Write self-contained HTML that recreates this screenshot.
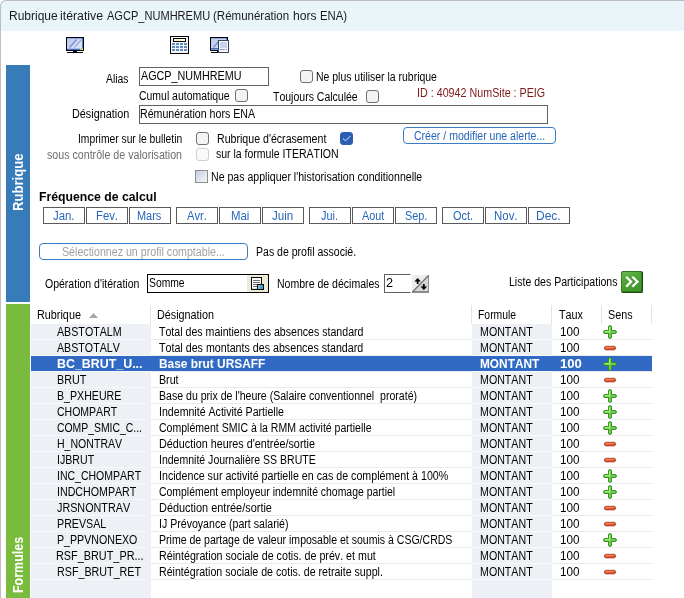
<!DOCTYPE html>
<html lang="fr"><head><meta charset="utf-8"><title>Rubrique itérative AGCP_NUMHREMU</title>
<style>
html,body{margin:0;padding:0;background:#fff;}
body{width:684px;height:598px;overflow:hidden;position:relative;font-family:"Liberation Sans",sans-serif;}
#win{will-change:transform;position:absolute;left:0;top:0;width:684px;height:598px;overflow:hidden;background:#fff;}
.t{position:absolute;white-space:nowrap;font-size:12px;line-height:16px;color:#000;transform-origin:0 0;font-kerning:none;}
.b{position:absolute;}
.cb{position:absolute;width:13px;height:13px;box-sizing:border-box;border:1px solid #707070;border-radius:3px;background:#f3f3f3;}
.cb.dis{border-color:#cfcfcf;background:#fafafa;}
.cb.on{border-color:#2c5db5;background:#2c5db5;}
.inp{position:absolute;box-sizing:border-box;border:1px solid #626262;background:#fff;}
.rbtn{position:absolute;box-sizing:border-box;border:1px solid #3b7cc4;border-radius:4px;background:#fff;}
.vt{position:absolute;color:#fff;font-weight:bold;font-size:14px;line-height:20px;font-kerning:none;white-space:nowrap;transform-origin:0 0;transform:rotate(-90deg);}
svg{position:absolute;overflow:visible;}
</style></head>
<body>
<div id="win">
<div class="b" style="left:31px;top:324px;width:120px;height:274px;background:#edf0f5"></div>
<div class="b" style="left:472px;top:324px;width:80px;height:274px;background:#edf0f5"></div>
<div class="b" style="left:31px;top:339px;width:621px;height:1px;background:#ebebeb"></div>
<div class="b" style="left:31px;top:339px;width:120px;height:1px;background:#f6f8fb"></div>
<div class="b" style="left:472px;top:339px;width:80px;height:1px;background:#f6f8fb"></div>
<div class="b" style="left:31px;top:355px;width:621px;height:1px;background:#ebebeb"></div>
<div class="b" style="left:31px;top:355px;width:120px;height:1px;background:#f6f8fb"></div>
<div class="b" style="left:472px;top:355px;width:80px;height:1px;background:#f6f8fb"></div>
<div class="b" style="left:31px;top:371px;width:621px;height:1px;background:#ebebeb"></div>
<div class="b" style="left:31px;top:371px;width:120px;height:1px;background:#f6f8fb"></div>
<div class="b" style="left:472px;top:371px;width:80px;height:1px;background:#f6f8fb"></div>
<div class="b" style="left:31px;top:387px;width:621px;height:1px;background:#ebebeb"></div>
<div class="b" style="left:31px;top:387px;width:120px;height:1px;background:#f6f8fb"></div>
<div class="b" style="left:472px;top:387px;width:80px;height:1px;background:#f6f8fb"></div>
<div class="b" style="left:31px;top:403px;width:621px;height:1px;background:#ebebeb"></div>
<div class="b" style="left:31px;top:403px;width:120px;height:1px;background:#f6f8fb"></div>
<div class="b" style="left:472px;top:403px;width:80px;height:1px;background:#f6f8fb"></div>
<div class="b" style="left:31px;top:419px;width:621px;height:1px;background:#ebebeb"></div>
<div class="b" style="left:31px;top:419px;width:120px;height:1px;background:#f6f8fb"></div>
<div class="b" style="left:472px;top:419px;width:80px;height:1px;background:#f6f8fb"></div>
<div class="b" style="left:31px;top:435px;width:621px;height:1px;background:#ebebeb"></div>
<div class="b" style="left:31px;top:435px;width:120px;height:1px;background:#f6f8fb"></div>
<div class="b" style="left:472px;top:435px;width:80px;height:1px;background:#f6f8fb"></div>
<div class="b" style="left:31px;top:451px;width:621px;height:1px;background:#ebebeb"></div>
<div class="b" style="left:31px;top:451px;width:120px;height:1px;background:#f6f8fb"></div>
<div class="b" style="left:472px;top:451px;width:80px;height:1px;background:#f6f8fb"></div>
<div class="b" style="left:31px;top:467px;width:621px;height:1px;background:#ebebeb"></div>
<div class="b" style="left:31px;top:467px;width:120px;height:1px;background:#f6f8fb"></div>
<div class="b" style="left:472px;top:467px;width:80px;height:1px;background:#f6f8fb"></div>
<div class="b" style="left:31px;top:483px;width:621px;height:1px;background:#ebebeb"></div>
<div class="b" style="left:31px;top:483px;width:120px;height:1px;background:#f6f8fb"></div>
<div class="b" style="left:472px;top:483px;width:80px;height:1px;background:#f6f8fb"></div>
<div class="b" style="left:31px;top:499px;width:621px;height:1px;background:#ebebeb"></div>
<div class="b" style="left:31px;top:499px;width:120px;height:1px;background:#f6f8fb"></div>
<div class="b" style="left:472px;top:499px;width:80px;height:1px;background:#f6f8fb"></div>
<div class="b" style="left:31px;top:515px;width:621px;height:1px;background:#ebebeb"></div>
<div class="b" style="left:31px;top:515px;width:120px;height:1px;background:#f6f8fb"></div>
<div class="b" style="left:472px;top:515px;width:80px;height:1px;background:#f6f8fb"></div>
<div class="b" style="left:31px;top:531px;width:621px;height:1px;background:#ebebeb"></div>
<div class="b" style="left:31px;top:531px;width:120px;height:1px;background:#f6f8fb"></div>
<div class="b" style="left:472px;top:531px;width:80px;height:1px;background:#f6f8fb"></div>
<div class="b" style="left:31px;top:547px;width:621px;height:1px;background:#ebebeb"></div>
<div class="b" style="left:31px;top:547px;width:120px;height:1px;background:#f6f8fb"></div>
<div class="b" style="left:472px;top:547px;width:80px;height:1px;background:#f6f8fb"></div>
<div class="b" style="left:31px;top:563px;width:621px;height:1px;background:#ebebeb"></div>
<div class="b" style="left:31px;top:563px;width:120px;height:1px;background:#f6f8fb"></div>
<div class="b" style="left:472px;top:563px;width:80px;height:1px;background:#f6f8fb"></div>
<div class="b" style="left:31px;top:579px;width:621px;height:1px;background:#ebebeb"></div>
<div class="b" style="left:31px;top:579px;width:120px;height:1px;background:#f6f8fb"></div>
<div class="b" style="left:472px;top:579px;width:80px;height:1px;background:#f6f8fb"></div>
<div class="b" style="left:31px;top:356px;width:621px;height:15px;background:#316ac5"></div>
<div class="b" style="left:150px;top:305px;width:1px;height:19px;background:#e2e2e2"></div>
<div class="b" style="left:471px;top:305px;width:1px;height:19px;background:#e2e2e2"></div>
<div class="b" style="left:551px;top:305px;width:1px;height:19px;background:#e2e2e2"></div>
<div class="b" style="left:601px;top:305px;width:1px;height:19px;background:#e2e2e2"></div>
<div class="b" style="left:651px;top:305px;width:1px;height:19px;background:#e2e2e2"></div>
<div class="b" style="left:43px;top:207px;width:42px;height:17px;border:1px solid #5a5a5a;box-sizing:border-box;background:#fff"></div>
<div class="b" style="left:86px;top:207px;width:42px;height:17px;border:1px solid #5a5a5a;box-sizing:border-box;background:#fff"></div>
<div class="b" style="left:129px;top:207px;width:42px;height:17px;border:1px solid #5a5a5a;box-sizing:border-box;background:#fff"></div>
<div class="b" style="left:176px;top:207px;width:42px;height:17px;border:1px solid #5a5a5a;box-sizing:border-box;background:#fff"></div>
<div class="b" style="left:219px;top:207px;width:42px;height:17px;border:1px solid #5a5a5a;box-sizing:border-box;background:#fff"></div>
<div class="b" style="left:262px;top:207px;width:42px;height:17px;border:1px solid #5a5a5a;box-sizing:border-box;background:#fff"></div>
<div class="b" style="left:309px;top:207px;width:42px;height:17px;border:1px solid #5a5a5a;box-sizing:border-box;background:#fff"></div>
<div class="b" style="left:352px;top:207px;width:42px;height:17px;border:1px solid #5a5a5a;box-sizing:border-box;background:#fff"></div>
<div class="b" style="left:395px;top:207px;width:42px;height:17px;border:1px solid #5a5a5a;box-sizing:border-box;background:#fff"></div>
<div class="b" style="left:442px;top:207px;width:42px;height:17px;border:1px solid #5a5a5a;box-sizing:border-box;background:#fff"></div>
<div class="b" style="left:485px;top:207px;width:42px;height:17px;border:1px solid #5a5a5a;box-sizing:border-box;background:#fff"></div>
<div class="b" style="left:528px;top:207px;width:42px;height:17px;border:1px solid #5a5a5a;box-sizing:border-box;background:#fff"></div>
<!-- window frame -->
<div class="b" style="left:0;top:0;width:700px;height:31px;background:#e9f5f8;border-top:1px solid #bdbdbd;border-left:1px solid #bdbdbd;border-top-left-radius:6px;box-sizing:border-box;"></div>
<div class="b" style="left:0;top:6px;width:1px;height:592px;background:#bebebe;"></div>
<!-- side bars -->
<div class="b" style="left:6px;top:65px;width:24px;height:237px;background:#377bb9;"></div>
<div class="b" style="left:6px;top:304px;width:24px;height:294px;background:#79bb3c;"></div>
<!-- inputs -->
<div class="inp" style="left:139px;top:67px;width:130px;height:19px;"></div>
<div class="inp" style="left:139px;top:105px;width:409px;height:19px;"></div>
<div class="inp" style="left:147px;top:274px;width:122px;height:19px;border-color:#000;"></div>
<div class="b" style="left:247px;top:275px;width:21px;height:17px;background:#ece9d8;"></div>
<div class="inp" style="left:384px;top:274px;width:27px;height:19px;border-color:#5f5f5f #fff #5f5f5f #5f5f5f;"></div>
<!-- checkboxes -->
<div class="cb" style="left:300px;top:70px;"></div>
<div class="cb" style="left:235px;top:89px;"></div>
<div class="cb" style="left:366px;top:90px;"></div>
<div class="cb" style="left:196px;top:132px;"></div>
<div class="cb dis" style="left:196px;top:148px;"></div>
<div class="cb on" style="left:340px;top:132px;"></div>
<svg style="left:340px;top:132px" width="13" height="13" viewBox="0 0 13 13"><path d="M3.3 6.8 L5.5 8.9 L9.9 4.4" fill="none" stroke="#e6edfa" stroke-width="1" stroke-linecap="round" stroke-linejoin="round"/></svg>
<div class="b" style="left:195px;top:170px;width:13px;height:13px;box-sizing:border-box;border:1px solid #8e8f8f;background:linear-gradient(135deg,#c3cbdb 0%,#dfe4ee 50%,#f4f6f9 100%);"></div>
<!-- rounded buttons -->
<div class="rbtn" style="left:403px;top:127px;width:153px;height:17px;"></div>
<div class="rbtn" style="left:39px;top:243px;width:209px;height:17px;"></div>
<!-- monitor icon -->
<svg style="left:66px;top:37px" width="18" height="16" viewBox="0 0 18 16" shape-rendering="crispEdges">
<defs><linearGradient id="scr" x1="0" y1="0" x2="1" y2="1"><stop offset="0" stop-color="#b9c9ea"/><stop offset="1" stop-color="#e2e9f6"/></linearGradient></defs>
<rect x="0" y="0" width="18" height="14" fill="#05050f"/>
<rect x="1" y="1" width="16" height="12" fill="url(#scr)"/>
<rect x="1" y="1" width="16" height="1" fill="#8ea6dc"/>
<rect x="16" y="1" width="1" height="11" fill="#5a7cc8"/>
<rect x="1" y="12" width="16" height="1" fill="#4a6fc0"/>
<rect x="1" y="11" width="16" height="1" fill="#a9bce6"/>
<rect x="14" y="12" width="3" height="1" fill="#f2e43c"/>
<g shape-rendering="auto"><path d="M3.5 10.5 L10.5 2.5" stroke="#7a93d6" stroke-width="1.6" fill="none"/><path d="M8.5 10.5 L15.5 2.5" stroke="#6a86d0" stroke-width="0.9" fill="none"/></g>
<rect x="7" y="14" width="4" height="1" fill="#05050f"/>
<rect x="1" y="15" width="16" height="1" fill="#05050f"/>
</svg>
<!-- calculator icon -->
<svg style="left:170px;top:36px" width="19" height="18" viewBox="0 0 19 18" shape-rendering="crispEdges">
<rect x="0" y="0" width="19" height="18" fill="#050505"/>
<rect x="1" y="1" width="17" height="16" fill="#f3f6fc"/>
<rect x="3" y="2" width="13" height="4" fill="#050505"/>
<rect x="4" y="3" width="11" height="2" fill="#fff"/>
<rect x="4" y="3" width="7" height="2" fill="#fbf2bd"/>
<g fill="#5f8fb8">
<rect x="2" y="7" width="3" height="2"/><rect x="6" y="7" width="3" height="2"/><rect x="10" y="7" width="3" height="2"/><rect x="14" y="7" width="3" height="2"/>
<rect x="2" y="10" width="3" height="2"/><rect x="6" y="10" width="3" height="2"/><rect x="10" y="10" width="3" height="2"/><rect x="14" y="10" width="3" height="2"/>
<rect x="2" y="13" width="3" height="2"/><rect x="6" y="13" width="3" height="2"/><rect x="10" y="13" width="3" height="2"/><rect x="14" y="13" width="3" height="2"/>
</g>
</svg>
<!-- monitor + doc icon -->
<svg style="left:210px;top:37px" width="19" height="16" viewBox="0 0 19 16" shape-rendering="crispEdges">
<rect x="0" y="0" width="18" height="14" fill="#05050f"/>
<rect x="1" y="1" width="16" height="12" fill="url(#scr)"/>
<rect x="1" y="1" width="16" height="1" fill="#8ea6dc"/>
<rect x="16" y="1" width="1" height="3" fill="#5a7cc8"/>
<rect x="1" y="11" width="8" height="1" fill="#4a6fc0"/>
<rect x="1" y="12" width="8" height="1" fill="#7f9ade"/>
<g shape-rendering="auto"><path d="M3.5 10.5 L9 4" stroke="#7a93d6" stroke-width="1.6" fill="none"/></g>
<rect x="1" y="15" width="7" height="1" fill="#05050f"/>
<rect x="7" y="14" width="1" height="1" fill="#05050f"/>
<rect x="8" y="3" width="11" height="13" fill="#3a4852"/>
<rect x="9" y="4" width="9" height="11" fill="#fbfbff"/>
<rect x="10" y="5" width="7" height="6" fill="#c8d3ee"/>
<rect x="10" y="12" width="5" height="1" fill="#7b94d4"/>
<rect x="16" y="12" width="1" height="1" fill="#6c88d0"/>
</svg>
<!-- somme list icon -->
<svg style="left:251px;top:277px" width="13" height="13" viewBox="0 0 13 13" shape-rendering="crispEdges">
<rect x="0" y="0" width="11" height="13" fill="#0a0a0a"/>
<rect x="1" y="1" width="9" height="11" fill="#fbfbfb"/>
<g fill="#6b6b6b"><rect x="2" y="3" width="7" height="1"/><rect x="2" y="5" width="7" height="1"/><rect x="2" y="7" width="5" height="1"/><rect x="2" y="9" width="5" height="1"/></g>
<rect x="1" y="11" width="6" height="1" fill="#dcdcdc"/>
<rect x="6" y="7" width="7" height="6" fill="#0a0a0a"/>
<rect x="7" y="8" width="5" height="4" fill="#4aa0c8"/>
<rect x="7" y="8" width="2" height="4" fill="#7cc4e0"/>
</svg>
<!-- spin button -->
<svg style="left:412px;top:275px" width="17" height="18" viewBox="0 0 18 18" preserveAspectRatio="none">
<rect x="0" y="0" width="18" height="18" fill="#d6d6d6" shape-rendering="crispEdges"/>
<path d="M0 0 H17 L0 17 Z" fill="#ededed"/>
<rect x="0" y="16" width="18" height="2" fill="#8c8c8c" shape-rendering="crispEdges"/>
<rect x="17" y="0" width="1" height="18" fill="#8c8c8c" shape-rendering="crispEdges"/>
<path d="M0.5 17 L17.5 0.5" stroke="#6e6e6e" stroke-width="1.2" fill="none"/>
<path d="M6 3 L9.5 6.5 H7 V9 H5 V6.5 H2.5 Z" fill="#000"/>
<path d="M12.5 15 L16 11.5 H13.5 V9 H11.5 V11.5 H9 Z" fill="#000"/>
</svg>
<!-- green >> button -->
<svg style="left:621px;top:271px" width="22" height="22" viewBox="0 0 22 22">
<defs><linearGradient id="gb" x1="0" y1="0" x2="0.5" y2="1"><stop offset="0" stop-color="#6cbb4e"/><stop offset="0.45" stop-color="#4ea236"/><stop offset="1" stop-color="#41972c"/></linearGradient></defs>
<rect x="0" y="0" width="22" height="22" rx="2" fill="#2e761b"/>
<path d="M21.2 1.5 V20 Q21.2 21.2 20 21.2 H1.5" stroke="#1b4a0d" stroke-width="1.5" fill="none"/>
<rect x="0.9" y="0.9" width="19.6" height="19.6" rx="1.5" fill="url(#gb)"/>
<path d="M5.2 5.8 L10.1 10.7 L5.2 15.6 M11.4 5.8 L16.5 10.7 L11.4 15.6" stroke="#fff" stroke-width="2.2" fill="none" stroke-linejoin="miter"/>
</svg>
<!-- sort arrow -->
<svg style="left:89px;top:313px" width="9" height="5" viewBox="0 0 9 5"><path d="M0 5 L4.5 0 L9 5 Z" fill="#a6a6a6"/></svg>
<svg style="left:603px;top:325px" width="14" height="14" viewBox="0 0 14 14"><path d="M5.6 1.2 Q7 0 8.4 1.2 V5.6 H12.8 Q14 7 12.8 8.4 H8.4 V12.8 Q7 14 5.6 12.8 V8.4 H1.2 Q0 7 1.2 5.6 H5.6 Z" fill="#78d452" stroke="#2f8a1c" stroke-width="1"/><path d="M6.6 2 V6.6 H2" stroke="#b4f09a" stroke-width="1" fill="none"/></svg>
<svg style="left:604px;top:346px" width="12" height="4" viewBox="0 0 12 4"><rect x="0.4" y="0.3" width="11.2" height="3.6" rx="1.8" fill="#e2532d" stroke="#b03618" stroke-width="0.8"/><rect x="1.5" y="1.1" width="8" height="0.9" fill="#f29a78"/></svg>
<svg style="left:603px;top:357px" width="14" height="14" viewBox="0 0 14 14"><path d="M5.6 1.2 Q7 0 8.4 1.2 V5.6 H12.8 Q14 7 12.8 8.4 H8.4 V12.8 Q7 14 5.6 12.8 V8.4 H1.2 Q0 7 1.2 5.6 H5.6 Z" fill="#78d452" stroke="#2f8a1c" stroke-width="1"/><path d="M6.6 2 V6.6 H2" stroke="#b4f09a" stroke-width="1" fill="none"/></svg>
<svg style="left:604px;top:378px" width="12" height="4" viewBox="0 0 12 4"><rect x="0.4" y="0.3" width="11.2" height="3.6" rx="1.8" fill="#e2532d" stroke="#b03618" stroke-width="0.8"/><rect x="1.5" y="1.1" width="8" height="0.9" fill="#f29a78"/></svg>
<svg style="left:603px;top:389px" width="14" height="14" viewBox="0 0 14 14"><path d="M5.6 1.2 Q7 0 8.4 1.2 V5.6 H12.8 Q14 7 12.8 8.4 H8.4 V12.8 Q7 14 5.6 12.8 V8.4 H1.2 Q0 7 1.2 5.6 H5.6 Z" fill="#78d452" stroke="#2f8a1c" stroke-width="1"/><path d="M6.6 2 V6.6 H2" stroke="#b4f09a" stroke-width="1" fill="none"/></svg>
<svg style="left:603px;top:405px" width="14" height="14" viewBox="0 0 14 14"><path d="M5.6 1.2 Q7 0 8.4 1.2 V5.6 H12.8 Q14 7 12.8 8.4 H8.4 V12.8 Q7 14 5.6 12.8 V8.4 H1.2 Q0 7 1.2 5.6 H5.6 Z" fill="#78d452" stroke="#2f8a1c" stroke-width="1"/><path d="M6.6 2 V6.6 H2" stroke="#b4f09a" stroke-width="1" fill="none"/></svg>
<svg style="left:603px;top:421px" width="14" height="14" viewBox="0 0 14 14"><path d="M5.6 1.2 Q7 0 8.4 1.2 V5.6 H12.8 Q14 7 12.8 8.4 H8.4 V12.8 Q7 14 5.6 12.8 V8.4 H1.2 Q0 7 1.2 5.6 H5.6 Z" fill="#78d452" stroke="#2f8a1c" stroke-width="1"/><path d="M6.6 2 V6.6 H2" stroke="#b4f09a" stroke-width="1" fill="none"/></svg>
<svg style="left:604px;top:442px" width="12" height="4" viewBox="0 0 12 4"><rect x="0.4" y="0.3" width="11.2" height="3.6" rx="1.8" fill="#e2532d" stroke="#b03618" stroke-width="0.8"/><rect x="1.5" y="1.1" width="8" height="0.9" fill="#f29a78"/></svg>
<svg style="left:604px;top:458px" width="12" height="4" viewBox="0 0 12 4"><rect x="0.4" y="0.3" width="11.2" height="3.6" rx="1.8" fill="#e2532d" stroke="#b03618" stroke-width="0.8"/><rect x="1.5" y="1.1" width="8" height="0.9" fill="#f29a78"/></svg>
<svg style="left:603px;top:469px" width="14" height="14" viewBox="0 0 14 14"><path d="M5.6 1.2 Q7 0 8.4 1.2 V5.6 H12.8 Q14 7 12.8 8.4 H8.4 V12.8 Q7 14 5.6 12.8 V8.4 H1.2 Q0 7 1.2 5.6 H5.6 Z" fill="#78d452" stroke="#2f8a1c" stroke-width="1"/><path d="M6.6 2 V6.6 H2" stroke="#b4f09a" stroke-width="1" fill="none"/></svg>
<svg style="left:603px;top:485px" width="14" height="14" viewBox="0 0 14 14"><path d="M5.6 1.2 Q7 0 8.4 1.2 V5.6 H12.8 Q14 7 12.8 8.4 H8.4 V12.8 Q7 14 5.6 12.8 V8.4 H1.2 Q0 7 1.2 5.6 H5.6 Z" fill="#78d452" stroke="#2f8a1c" stroke-width="1"/><path d="M6.6 2 V6.6 H2" stroke="#b4f09a" stroke-width="1" fill="none"/></svg>
<svg style="left:604px;top:506px" width="12" height="4" viewBox="0 0 12 4"><rect x="0.4" y="0.3" width="11.2" height="3.6" rx="1.8" fill="#e2532d" stroke="#b03618" stroke-width="0.8"/><rect x="1.5" y="1.1" width="8" height="0.9" fill="#f29a78"/></svg>
<svg style="left:604px;top:522px" width="12" height="4" viewBox="0 0 12 4"><rect x="0.4" y="0.3" width="11.2" height="3.6" rx="1.8" fill="#e2532d" stroke="#b03618" stroke-width="0.8"/><rect x="1.5" y="1.1" width="8" height="0.9" fill="#f29a78"/></svg>
<svg style="left:603px;top:533px" width="14" height="14" viewBox="0 0 14 14"><path d="M5.6 1.2 Q7 0 8.4 1.2 V5.6 H12.8 Q14 7 12.8 8.4 H8.4 V12.8 Q7 14 5.6 12.8 V8.4 H1.2 Q0 7 1.2 5.6 H5.6 Z" fill="#78d452" stroke="#2f8a1c" stroke-width="1"/><path d="M6.6 2 V6.6 H2" stroke="#b4f09a" stroke-width="1" fill="none"/></svg>
<svg style="left:604px;top:554px" width="12" height="4" viewBox="0 0 12 4"><rect x="0.4" y="0.3" width="11.2" height="3.6" rx="1.8" fill="#e2532d" stroke="#b03618" stroke-width="0.8"/><rect x="1.5" y="1.1" width="8" height="0.9" fill="#f29a78"/></svg>
<svg style="left:604px;top:570px" width="12" height="4" viewBox="0 0 12 4"><rect x="0.4" y="0.3" width="11.2" height="3.6" rx="1.8" fill="#e2532d" stroke="#b03618" stroke-width="0.8"/><rect x="1.5" y="1.1" width="8" height="0.9" fill="#f29a78"/></svg>
<span class="t" style="left:9.00px;top:8px;transform:scaleX(0.9997);color:#1b1b1b;font-size:12px;white-space:pre;">Rubrique </span>
<span class="t" style="left:60.22px;top:8px;transform:scaleX(1.0238);color:#1b1b1b;font-size:12px;white-space:pre;">itérative </span>
<span class="t" style="left:107.28px;top:8px;transform:scaleX(0.9209);color:#1b1b1b;font-size:12px;white-space:pre;">AGCP_NUMHREMU </span>
<span class="t" style="left:213.47px;top:8px;transform:scaleX(0.9594);color:#1b1b1b;font-size:12px;white-space:pre;">(Rémunération </span>
<span class="t" style="left:292.89px;top:8px;transform:scaleX(1.0128);color:#1b1b1b;font-size:12px;white-space:pre;">hors </span>
<span class="t" style="left:320.36px;top:8px;transform:scaleX(0.9444);color:#1b1b1b;font-size:12px;white-space:pre;">ENA)</span>
<span class="t" style="left:105.89px;top:71px;transform:scaleX(0.8654);">Alias</span>
<span class="t" style="left:140.89px;top:68px;transform:scaleX(0.8974);">AGCP_NUMHREMU</span>
<span class="t" style="left:315.88px;top:69px;transform:scaleX(0.8715);">Ne plus utiliser la rubrique</span>
<span class="t" style="left:139.49px;top:88px;transform:scaleX(0.8711);">Cumul automatique</span>
<span class="t" style="left:272.85px;top:89px;transform:scaleX(0.8756);">Toujours Calculée</span>
<span class="t" style="left:417.35px;top:85px;transform:scaleX(0.8940);color:#7e1717;">ID : 40942 NumSite : PEIG</span>
<span class="t" style="left:71.60px;top:106px;transform:scaleX(0.9032);">Désignation</span>
<span class="t" style="left:140.32px;top:106px;transform:scaleX(0.8845);">Rémunération hors ENA</span>
<span class="t" style="left:77.89px;top:131px;transform:scaleX(0.8583);">Imprimer sur le bulletin</span>
<span class="t" style="left:216.87px;top:131px;transform:scaleX(0.8840);">Rubrique d&#x27;écrasement</span>
<span class="t" style="left:413.98px;top:128px;transform:scaleX(0.8786);color:#2566b8;">Créer / modifier une alerte...</span>
<span class="t" style="left:47.05px;top:147px;transform:scaleX(0.8878);color:#6e6e6e;">sous contrôle de valorisation</span>
<span class="t" style="left:216.30px;top:146px;transform:scaleX(0.8755);">sur la formule ITERATION</span>
<span class="t" style="left:211.37px;top:169px;transform:scaleX(0.8809);">Ne pas appliquer l&#x27;historisation conditionnelle</span>
<span class="t" style="left:38.72px;top:189px;transform:scaleX(1.0195);font-weight:bold;">Fréquence de calcul</span>
<span class="t" style="left:61.72px;top:244px;transform:scaleX(0.8876);color:#a0a0a0;">Sélectionnez un profil comptable...</span>
<span class="t" style="left:255.87px;top:244px;transform:scaleX(0.8772);">Pas de profil associé.</span>
<span class="t" style="left:45.28px;top:276px;transform:scaleX(0.8759);">Opération d&#x27;itération</span>
<span class="t" style="left:148.75px;top:275px;transform:scaleX(0.8608);">Somme</span>
<span class="t" style="left:276.87px;top:276px;transform:scaleX(0.8784);">Nombre de décimales</span>
<span class="t" style="left:386.39px;top:275px;transform:scaleX(1.0592);">2</span>
<span class="t" style="left:508.62px;top:274px;transform:scaleX(0.8791);">Liste des Participations</span>
<span class="t" style="left:53.29px;top:208px;transform:scaleX(0.9495);color:#2566b8;">Jan.</span>
<span class="t" style="left:95.81px;top:208px;transform:scaleX(0.9403);color:#2566b8;">Fev.</span>
<span class="t" style="left:137.34px;top:208px;transform:scaleX(0.9103);color:#2566b8;">Mars</span>
<span class="t" style="left:186.63px;top:208px;transform:scaleX(0.9307);color:#2566b8;">Avr.</span>
<span class="t" style="left:230.80px;top:208px;transform:scaleX(0.9471);color:#2566b8;">Mai</span>
<span class="t" style="left:272.28px;top:208px;transform:scaleX(0.9671);color:#2566b8;">Juin</span>
<span class="t" style="left:321.31px;top:208px;transform:scaleX(0.9083);color:#2566b8;">Jui.</span>
<span class="t" style="left:361.89px;top:208px;transform:scaleX(0.9042);color:#2566b8;">Aout</span>
<span class="t" style="left:404.96px;top:208px;transform:scaleX(0.9042);color:#2566b8;">Sep.</span>
<span class="t" style="left:453.26px;top:208px;transform:scaleX(0.9164);color:#2566b8;">Oct.</span>
<span class="t" style="left:493.55px;top:208px;transform:scaleX(0.9536);color:#2566b8;">Nov.</span>
<span class="t" style="left:536.25px;top:208px;transform:scaleX(0.9980);color:#2566b8;">Dec.</span>
<span class="t" style="left:36.60px;top:307px;transform:scaleX(0.9021);">Rubrique</span>
<span class="t" style="left:156.60px;top:307px;transform:scaleX(0.8992);">Désignation</span>
<span class="t" style="left:477.88px;top:307px;transform:scaleX(0.8668);">Formule</span>
<span class="t" style="left:558.59px;top:307px;transform:scaleX(0.8993);">Taux</span>
<span class="t" style="left:607.72px;top:307px;transform:scaleX(0.8961);">Sens</span>
<span class="t" style="left:57.29px;top:324px;transform:scaleX(0.8901);">ABSTOTALM</span>
<span class="t" style="left:159.45px;top:324px;transform:scaleX(0.8834);white-space:pre;">Total des maintiens des absences standard</span>
<span class="t" style="left:479.86px;top:324px;transform:scaleX(0.8879);">MONTANT</span>
<span class="t" style="left:559.53px;top:324px;transform:scaleX(0.9739);">100</span>
<span class="t" style="left:57.29px;top:340px;transform:scaleX(0.8885);">ABSTOTALV</span>
<span class="t" style="left:159.44px;top:340px;transform:scaleX(0.8901);white-space:pre;">Total des montants des absences standard</span>
<span class="t" style="left:479.86px;top:340px;transform:scaleX(0.8879);">MONTANT</span>
<span class="t" style="left:559.53px;top:340px;transform:scaleX(0.9739);">100</span>
<span class="t" style="left:56.61px;top:356px;transform:scaleX(1.0341);color:#fff;font-weight:bold;">BC_BRUT_U...</span>
<span class="t" style="left:158.84px;top:356px;transform:scaleX(0.9898);color:#fff;font-weight:bold;white-space:pre;">Base brut URSAFF</span>
<span class="t" style="left:479.99px;top:356px;transform:scaleX(0.9876);color:#fff;font-weight:bold;">MONTANT</span>
<span class="t" style="left:559.72px;top:356px;transform:scaleX(1.0932);color:#fff;font-weight:bold;">100</span>
<span class="t" style="left:56.50px;top:372px;transform:scaleX(0.8962);">BRUT</span>
<span class="t" style="left:158.71px;top:372px;transform:scaleX(0.8896);white-space:pre;">Brut</span>
<span class="t" style="left:479.86px;top:372px;transform:scaleX(0.8879);">MONTANT</span>
<span class="t" style="left:559.53px;top:372px;transform:scaleX(0.9739);">100</span>
<span class="t" style="left:56.51px;top:388px;transform:scaleX(0.8854);">B_PXHEURE</span>
<span class="t" style="left:158.72px;top:388px;transform:scaleX(0.8804);white-space:pre;">Base du prix de l&#x27;heure (Salaire conventionnel  proraté)</span>
<span class="t" style="left:479.86px;top:388px;transform:scaleX(0.8879);">MONTANT</span>
<span class="t" style="left:559.53px;top:388px;transform:scaleX(0.9739);">100</span>
<span class="t" style="left:56.88px;top:404px;transform:scaleX(0.8758);">CHOMPART</span>
<span class="t" style="left:158.71px;top:404px;transform:scaleX(0.8835);white-space:pre;">Indemnité Activité Partielle</span>
<span class="t" style="left:479.86px;top:404px;transform:scaleX(0.8879);">MONTANT</span>
<span class="t" style="left:559.53px;top:404px;transform:scaleX(0.9739);">100</span>
<span class="t" style="left:56.89px;top:420px;transform:scaleX(0.8671);">COMP_SMIC_C...</span>
<span class="t" style="left:159.08px;top:420px;transform:scaleX(0.8779);white-space:pre;">Complément SMIC à la RMM activité partielle</span>
<span class="t" style="left:479.86px;top:420px;transform:scaleX(0.8879);">MONTANT</span>
<span class="t" style="left:559.53px;top:420px;transform:scaleX(0.9739);">100</span>
<span class="t" style="left:56.52px;top:436px;transform:scaleX(0.8798);">H_NONTRAV</span>
<span class="t" style="left:158.70px;top:436px;transform:scaleX(0.9008);white-space:pre;">Déduction heures d&#x27;entrée/sortie</span>
<span class="t" style="left:479.86px;top:436px;transform:scaleX(0.8879);">MONTANT</span>
<span class="t" style="left:559.53px;top:436px;transform:scaleX(0.9739);">100</span>
<span class="t" style="left:56.51px;top:452px;transform:scaleX(0.8849);">IJBRUT</span>
<span class="t" style="left:158.72px;top:452px;transform:scaleX(0.8766);white-space:pre;">Indemnité Journalière SS BRUTE</span>
<span class="t" style="left:479.86px;top:452px;transform:scaleX(0.8879);">MONTANT</span>
<span class="t" style="left:559.53px;top:452px;transform:scaleX(0.9739);">100</span>
<span class="t" style="left:56.52px;top:468px;transform:scaleX(0.8756);">INC_CHOMPART</span>
<span class="t" style="left:158.71px;top:468px;transform:scaleX(0.8887);white-space:pre;">Incidence sur activité partielle en cas de complément à 100%</span>
<span class="t" style="left:479.86px;top:468px;transform:scaleX(0.8879);">MONTANT</span>
<span class="t" style="left:559.53px;top:468px;transform:scaleX(0.9739);">100</span>
<span class="t" style="left:56.51px;top:484px;transform:scaleX(0.8875);">INDCHOMPART</span>
<span class="t" style="left:159.09px;top:484px;transform:scaleX(0.8697);white-space:pre;">Complément employeur indemnité chomage partiel</span>
<span class="t" style="left:479.86px;top:484px;transform:scaleX(0.8879);">MONTANT</span>
<span class="t" style="left:559.53px;top:484px;transform:scaleX(0.9739);">100</span>
<span class="t" style="left:56.97px;top:500px;transform:scaleX(0.8985);">JRSNONTRAV</span>
<span class="t" style="left:158.69px;top:500px;transform:scaleX(0.9102);white-space:pre;">Déduction entrée/sortie</span>
<span class="t" style="left:479.86px;top:500px;transform:scaleX(0.8879);">MONTANT</span>
<span class="t" style="left:559.53px;top:500px;transform:scaleX(0.9739);">100</span>
<span class="t" style="left:56.51px;top:516px;transform:scaleX(0.8907);">PREVSAL</span>
<span class="t" style="left:158.71px;top:516px;transform:scaleX(0.8821);white-space:pre;">IJ Prévoyance (part salarié)</span>
<span class="t" style="left:479.86px;top:516px;transform:scaleX(0.8879);">MONTANT</span>
<span class="t" style="left:559.53px;top:516px;transform:scaleX(0.9739);">100</span>
<span class="t" style="left:56.51px;top:532px;transform:scaleX(0.8860);">P_PPVNONEXO</span>
<span class="t" style="left:158.72px;top:532px;transform:scaleX(0.8780);white-space:pre;">Prime de partage de valeur imposable et soumis à CSG/CRDS</span>
<span class="t" style="left:479.86px;top:532px;transform:scaleX(0.8879);">MONTANT</span>
<span class="t" style="left:559.53px;top:532px;transform:scaleX(0.9739);">100</span>
<span class="t" style="left:56.49px;top:548px;transform:scaleX(0.9054);">RSF_BRUT_PR...</span>
<span class="t" style="left:158.71px;top:548px;transform:scaleX(0.8905);white-space:pre;">Réintégration sociale de cotis. de prév. et mut</span>
<span class="t" style="left:479.86px;top:548px;transform:scaleX(0.8879);">MONTANT</span>
<span class="t" style="left:559.53px;top:548px;transform:scaleX(0.9739);">100</span>
<span class="t" style="left:56.51px;top:564px;transform:scaleX(0.8944);">RSF_BRUT_RET</span>
<span class="t" style="left:158.71px;top:564px;transform:scaleX(0.8857);white-space:pre;">Réintégration sociale de cotis. de retraite suppl.</span>
<span class="t" style="left:479.86px;top:564px;transform:scaleX(0.8879);">MONTANT</span>
<span class="t" style="left:559.53px;top:564px;transform:scaleX(0.9739);">100</span>
<span class="vt" style="left:8.40px;top:210.94px;transform:rotate(-90deg) scaleX(0.9367);">Rubrique</span>
<span class="vt" style="left:7.90px;top:592.59px;transform:rotate(-90deg) scaleX(0.8912);">Formules</span>
</div>
</body></html>
